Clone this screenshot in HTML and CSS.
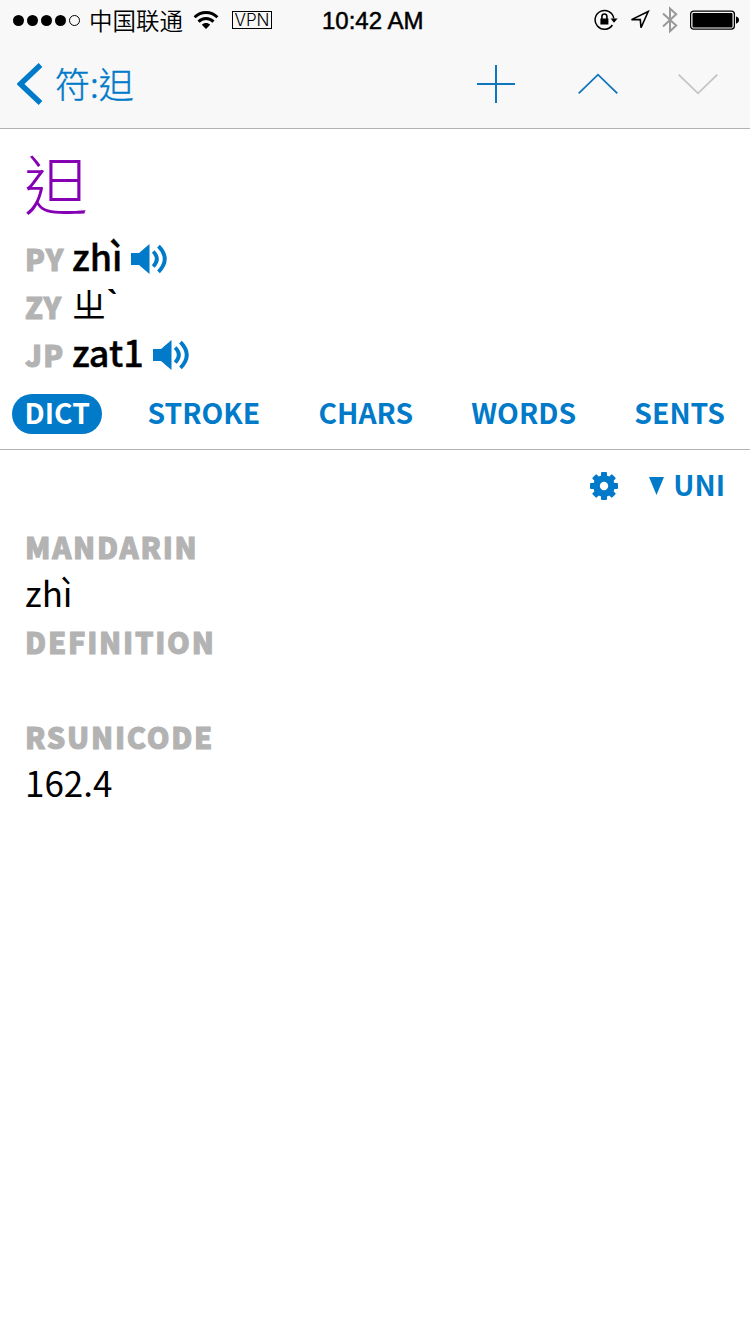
FILE: index.html
```html
<!DOCTYPE html>
<html lang="zh-CN">
<head>
    <meta charset="UTF-8">
    <meta name="viewport" content="width=device-width, initial-scale=1.0">
    <title>𨑨</title>
    <link rel="stylesheet" href="styles.css">
</head>
<body>
    <header>
        <div class="status-bar">
            <svg class="signal" width="68" height="14" viewBox="0 0 68 14">
                <circle cx="5.5" cy="7.5" r="5.5"/>
                <circle cx="19.5" cy="7.5" r="5.5"/>
                <circle cx="33.5" cy="7.5" r="5.5"/>
                <circle cx="47.5" cy="7.5" r="5.5"/>
                <circle cx="61.5" cy="7.5" r="5" fill="none" stroke="#000"/>
            </svg>
            <span class="carrier">中国联通</span>
            <svg class="wifi" width="26" height="20" viewBox="0 0 26 20" fill="none" stroke="#000" stroke-width="2.9">
                <path d="M1.6 7.3C8 .8 18 .8 24.4 7.3"/>
                <path d="M5.5 11.6C9.7 7.4 16.3 7.4 20.5 11.6"/>
                <path d="M13 19L8.8 14.7C11.2 12.4 14.8 12.4 17.2 14.7Z" fill="#000" stroke="none"/>
            </svg>
            <span class="vpn">VPN</span>
            <span class="time">10:42 AM</span>
            <svg class="lock" width="24" height="22" viewBox="0 0 24 22">
                <path d="M18.4 16A9.4 9.4 0 1 1 19.8 9.5" fill="none" stroke="#000" stroke-width="1.5"/>
                <path d="M16.6 9.6H23.6L20 13.8Z"/>
                <path d="M6.4 9.5H14.4V15.5H6.4Z"/>
                <path d="M7.9 10V7.6A2.5 2.6 0 0 1 12.9 7.6V10" fill="none" stroke="#000" stroke-width="1.6"/>
            </svg>
            <svg class="location" width="20" height="20" viewBox="0 0 20 20">
                <path d="M18.2 1.5L1.5 9.6H10.3L11 17.7Z" fill="none" stroke="#000" stroke-width="1.6"/>
            </svg>
            <svg class="bluetooth" width="16" height="28" viewBox="0 0 16 28">
                <path d="M1 7.5L14.2 19.5L8 25.3V2.5L14.2 8.2L1 20.5" fill="none" stroke="#999" stroke-width="2"/>
            </svg>
            <svg class="battery" width="49" height="20" viewBox="0 0 49 20">
                <rect x=".6" y="1.1" width="43.8" height="18" rx="3" fill="none" stroke="#000" stroke-width="1.3"/>
                <rect x="2.5" y="2.9" width="40" height="14.5" rx="1"/>
                <path d="M46 6.5Q49 7.2 49 10.1Q49 13 46 13.7Z"/>
            </svg>
        </div>
        <nav class="nav-bar">
            <a class="back">
                <svg width="26" height="42" viewBox="0 0 26 42">
                    <path d="M23.5 2L3.5 21L23.5 40" fill="none" stroke="#007ac9" stroke-width="5.4"/>
                </svg>
                <span>符:𨑨</span>
            </a>
            <svg class="add" width="38" height="38" viewBox="0 0 38 38">
                <path d="M19 0V38M0 19H38" stroke="#0f75bc" stroke-width="2"/>
            </svg>
            <svg class="up" width="40" height="22" viewBox="0 0 40 22">
                <path d="M.7 20.3L20 1.7L39.3 20.3" fill="none" stroke="#0f75bc" stroke-width="1.8"/>
            </svg>
            <svg class="down" width="40" height="22" viewBox="0 0 40 22">
                <path d="M.7 1.7L20 20.3L39.3 1.7" fill="none" stroke="#c4c4c4" stroke-width="1.8"/>
            </svg>
        </nav>
    </header>

    <section class="entry">
        <h1>𨑨</h1>
        <div class="reading">
            <span class="label">PY</span>
            <span class="sound">zhì</span>
            <svg class="speaker" width="36" height="30" viewBox="0 0 36 30">
                <path d="M0 9H8L18.5 0V30L8 21H0Z" fill="#007ac9"/>
                <path d="M22.2 7.5Q29.5 15 22.2 22.5M27.5 2.2Q40 15 27.5 27.8" fill="none" stroke="#007ac9" stroke-width="3.8"/>
            </svg>
        </div>
        <div class="reading">
            <span class="label">ZY</span>
            <span class="zhuyin">ㄓ<span class="tone">ˋ</span></span>
        </div>
        <div class="reading">
            <span class="label">JP</span>
            <span class="sound">zat1</span>
            <svg class="speaker" width="36" height="30" viewBox="0 0 36 30">
                <path d="M0 9H8L18.5 0V30L8 21H0Z" fill="#007ac9"/>
                <path d="M22.2 7.5Q29.5 15 22.2 22.5M27.5 2.2Q40 15 27.5 27.8" fill="none" stroke="#007ac9" stroke-width="3.8"/>
            </svg>
        </div>
    </section>

    <div class="tabs">
        <a class="tab active">DICT</a>
        <a class="tab">STROKE</a>
        <a class="tab">CHARS</a>
        <a class="tab">WORDS</a>
        <a class="tab">SENTS</a>
    </div>

    <div class="source">
        <svg class="gear" width="28" height="28" viewBox="-14 -14 28 28">
            <g fill="#007ac9">
                <rect x="-3" y="-14" width="6" height="28" rx="1"/>
                <rect x="-3" y="-14" width="6" height="28" rx="1" transform="rotate(45)"/>
                <rect x="-3" y="-14" width="6" height="28" rx="1" transform="rotate(90)"/>
                <rect x="-3" y="-14" width="6" height="28" rx="1" transform="rotate(135)"/>
                <circle r="10.8"/>
            </g>
            <circle r="4.2" fill="#fff"/>
        </svg>
        <svg class="arrow" width="15" height="18" viewBox="0 0 15 18">
            <path d="M0 0H15L7.5 18Z" fill="#007ac9"/>
        </svg>
        <span>UNI</span>
    </div>

    <dl class="definitions">
        <dt>MANDARIN</dt>
        <dd>zhì</dd>
        <dt>DEFINITION</dt>
        <dd></dd>
        <dt>RSUNICODE</dt>
        <dd>162.4</dd>
    </dl>
</body>
</html>
```
FILE: styles.css
```css
* {
    box-sizing: border-box;
}
body {
    margin: 0;
    width: 750px;
    min-height: 1334px;
    background: #fff;
    color: #000;
    font-family: "Noto Sans CJK SC", "Noto Sans CJK TC", sans-serif;
}
svg {
    display: block;
    flex: none;
}
header {
    height: 129px;
    background: #f8f8f8;
    border-bottom: 1px solid #b2b2b2;
}
.status-bar {
    display: flex;
    align-items: center;
    height: 40px;
    padding-left: 13px;
}
.carrier {
    width: 95px;
    margin-left: 8px;
    font-size: 23.5px;
    line-height: 38px;
    font-weight: 350;
    white-space: nowrap;
}
.wifi {
    margin-left: 9px;
}
.vpn {
    width: 40px;
    height: 18px;
    margin-left: 13px;
    border: 1px solid #000;
    font-family: Inter, sans-serif;
    font-size: 17px;
    font-weight: 300;
    line-height: 17px;
    text-align: center;
}
.time {
    width: 102px;
    height: 40px;
    margin-left: 50px;
    font-family: "Liberation Sans", sans-serif;
    font-size: 24px;
    line-height: 42px;
    -webkit-text-stroke: .5px #000;
    white-space: nowrap;
}
.lock {
    margin-left: 170px;
}
.location {
    margin-left: 12px;
}
.bluetooth {
    margin-left: 12px;
}
.battery {
    margin-left: 12px;
}
.nav-bar {
    display: flex;
    align-items: center;
    height: 88px;
    padding-left: 17px;
}
.back {
    display: flex;
    align-items: center;
    width: 460px;
    gap: 12px;
    color: #007ac9;
    font-size: 35px;
    font-weight: 300;
    line-height: 50px;
}
.back span {
    padding-bottom: 3px;
    -webkit-text-stroke: .4px #007ac9;
}
.up {
    margin-left: 63px;
}
.down {
    margin-left: 60px;
}
.entry {
    padding-left: 24px;
}
h1 {
    margin: 0;
    height: 106px;
    padding-top: 17px;
    color: #8500b5;
    font-size: 64px;
    font-weight: 300;
    line-height: 70px;
}
.reading {
    display: flex;
    align-items: center;
    height: 48px;
    padding-left: 1px;
}
.label {
    width: 47px;
    height: 48px;
    color: #b3b3b3;
    font-size: 29px;
    font-weight: 900;
    line-height: 46px;
    letter-spacing: 1.2px;
    -webkit-text-stroke: 1px #b3b3b3;
}
.sound {
    height: 48px;
    font-size: 36px;
    font-weight: 500;
    line-height: 40px;
    -webkit-text-stroke: .4px #000;
}
.speaker {
    margin-left: 9px;
}
.zhuyin {
    display: flex;
    height: 48px;
    font-size: 34px;
    line-height: 41px;
}
.tone {
    font-family: "Open Sans", sans-serif;
    font-size: 36px;
    font-weight: 700;
    line-height: 40px;
}
.tabs {
    display: flex;
    align-items: center;
    justify-content: space-between;
    height: 71px;
    padding: 0 12px;
    border-bottom: 1px solid #b2b2b2;
}
.tab {
    height: 40px;
    padding: 0 13px;
    border-radius: 20px;
    color: #007ac9;
    font-size: 28.3px;
    font-weight: 700;
    line-height: 36px;
}
.active {
    padding: 0 12.5px;
    background: #007ac9;
    color: #fff;
}
.source {
    display: flex;
    align-items: center;
    justify-content: flex-end;
    height: 72px;
    padding-right: 25px;
    color: #007ac9;
    font-size: 28.3px;
    font-weight: 700;
    line-height: 68px;
}
.source span {
    height: 72px;
}
.arrow {
    margin: 0 9px 0 31px;
}
.definitions {
    margin: 0;
    padding-left: 25px;
}
dt {
    height: 48px;
    color: #b3b3b3;
    font-size: 29px;
    font-weight: 900;
    line-height: 48px;
    letter-spacing: 1.75px;
    -webkit-text-stroke: 1px #b3b3b3;
}
dd {
    margin: 0;
    height: 47px;
    font-size: 35px;
    line-height: 43px;
}
```
